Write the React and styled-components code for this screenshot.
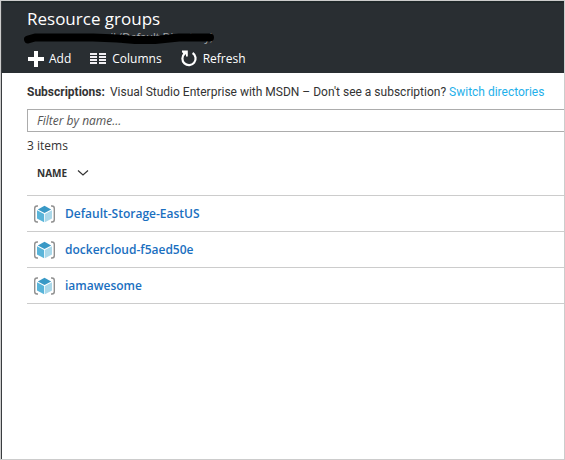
import React, { useState } from "react";
import styled, { createGlobalStyle } from "styled-components";

const GlobalStyle = createGlobalStyle`
  *, *::before, *::after { box-sizing: border-box; }
  body { margin: 0; background: #fff; }
  body, button, input { font-family: "Open Sans", "Noto Sans", sans-serif; font-size: 12px; }
`;

const Blade = styled.div`
  min-height: 100vh;
  border: 1px solid #ccc;
  color: #333;
  line-height: 16px;
`;

const BladeInner = styled.div`
  min-height: calc(100vh - 2px);
  border-left: 1px solid #3a3d40;
`;

const Header = styled.header`
  background: #292e32;
  border-top: 2px solid #20282a;
  color: #fff;
  padding: 4px 25px 1px;
`;

const Title = styled.h1`
  margin: 0;
  font-size: 17px;
  font-weight: 400;
  line-height: 24px;
`;

const Subtitle = styled.div`
  position: relative;
  height: 14px;
  width: 186px;
  color: #a9acae;
  font-size: 11px;
  line-height: 12px;
  text-align: right;
`;

const Scribble = styled.svg`
  position: absolute;
  left: -4px;
  top: 0;
`;

const Toolbar = styled.div`
  display: flex;
  gap: 18px;
  height: 27px;
  align-items: center;
`;

const ToolButton = styled.button`
  display: flex;
  align-items: center;
  gap: 5px;
  padding: 0;
  border: 0;
  background: none;
  color: #fff;
  line-height: 16px;
  cursor: pointer;
`;

const Content = styled.main`
  padding: 11px 0 0 25px;
`;

const Subscriptions = styled.p`
  display: flex;
  gap: 5px;
  margin: 0;
  font-family: Roboto, "Open Sans", sans-serif;
`;

const SwitchLink = styled.a`
  color: #1fb0ea;
  text-decoration: none;
`;

const FilterInput = styled.input`
  display: block;
  width: 100%;
  height: 23px;
  margin: 9px 0 6px;
  padding: 0 9px;
  border: 1px solid #acacac;
  border-right: 0;
  border-radius: 0;
  outline: 0;
  color: #333;
  &::placeholder { color: #555; font-style: italic; opacity: 1; }
`;

const Count = styled.div``;

const GroupTable = styled.table`
  width: 100%;
  border-collapse: separate;
  border-spacing: 0;
`;

const HeadCell = styled.th`
  height: 41px;
  padding: 0 10px 4px;
  text-align: left;
`;

const SortButton = styled.button`
  display: flex;
  align-items: center;
  gap: 10px;
  padding: 0;
  border: 0;
  background: none;
  color: #333;
  font-size: 10px;
  font-weight: 700;
  line-height: 16px;
  cursor: pointer;
`;

const BodyRow = styled.tr`
  &:last-child > td { height: 37px; border-bottom: 1px solid #ccc; }
`;

const Cell = styled.td`
  height: 36px;
  padding: 0 6px;
  border-top: 1px solid #ccc;
`;

const GroupLink = styled.a`
  display: flex;
  align-items: center;
  gap: 9px;
  color: #1a6fc0;
  font-weight: 600;
  text-decoration: none;
`;

const AddIcon = () => (
  <svg width="17" height="16" viewBox="0 0 17 16" aria-hidden="true">
    <path d="M1 6h6V0h4v6h6v4h-6v6H7v-6H1z" fill="#fff" />
  </svg>
);

const ColumnsIcon = () => (
  <svg width="18" height="11" viewBox="0 0 18 11" aria-hidden="true">
    <path d="M1 0h7v2H1zM10 0h7v2h-7zM1 3h7v2H1zM10 3h7v2h-7zM1 6h7v2H1zM10 6h7v2h-7zM1 9h7v2H1zM10 9h7v2h-7z" fill="#f0eef2" />
  </svg>
);

const RefreshIcon = () => (
  <svg width="18" height="17" viewBox="0 0 18 17" aria-hidden="true">
    <path d="M12.600 3A6.600 6.600 0 1 1 4.600 3.600" fill="none" stroke="#fff" strokeWidth="2.200" />
    <path d="M2 .6h5.800v6H6V4.200L4 5 2.500 2.400H2z" fill="#fff" />
  </svg>
);

const ChevronIcon = () => (
  <svg width="12" height="8" viewBox="0 0 12 8" aria-hidden="true">
    <path d="M1 1.500l5 4.500 5-4.500" fill="none" stroke="#333" strokeWidth="1.200" />
  </svg>
);

const GroupIcon = () => (
  <svg width="23" height="18" viewBox="0 0 23 18" aria-hidden="true">
    <path d="M5 1H4Q1.700 1 1.700 3.500v11Q1.700 17 4 17h1M18 1h1q2.300 0 2.300 2.500v11Q21.300 17 19 17h-1" fill="none" stroke="#909090" strokeWidth="1.400" />
    <path d="M11.500 .8l6.700 3.600-6.700 3.700-6.700-3.700z" fill="#3999c6" />
    <path d="M4 5.200l7.100 3.900v8.200L4 13.600z" fill="#59b4d9" />
    <path d="M19 5.200l-7.100 3.900v8.200l7.100-3.700z" fill="#a9d8ea" />
  </svg>
);

const groups = ["Default-Storage-EastUS", "dockercloud-f5aed50e", "iamawesome"];

export default function App() {
  const [filter, setFilter] = useState("");
  const [descending, setDescending] = useState(false);
  const visible = groups.filter((name) => name.toLowerCase().includes(filter.toLowerCase()));
  if (descending) visible.reverse();

  return (
    <>
      <GlobalStyle />
      <Blade>
        <BladeInner>
          <Header>
            <Title>Resource groups</Title>
            <Subtitle>
              il (Default Directory)
              <Scribble width="194" height="14" viewBox="0 0 194 14" aria-hidden="true">
                <path d="M5 8.500L12 6.500H70L94 7.500 112 9H132L156 6.500H187" fill="none" stroke="#000" strokeWidth="8" strokeLinecap="round" strokeLinejoin="round" />
              </Scribble>
            </Subtitle>
            <Toolbar>
              <ToolButton type="button"><AddIcon />Add</ToolButton>
              <ToolButton type="button"><ColumnsIcon />Columns</ToolButton>
              <ToolButton type="button"><RefreshIcon />Refresh</ToolButton>
            </Toolbar>
          </Header>
          <Content>
            <Subscriptions>
              <strong>Subscriptions:</strong>
              <span>
                Visual Studio Enterprise with MSDN – Don't see a subscription?{" "}
                <SwitchLink href="#directories">Switch directories</SwitchLink>
              </span>
            </Subscriptions>
            <FilterInput
              type="text"
              aria-label="Filter by name"
              placeholder="Filter by name..."
              value={filter}
              onChange={(event) => setFilter(event.target.value)}
            />
            <Count>{visible.length} items</Count>
            <GroupTable>
              <thead>
                <tr>
                  <HeadCell scope="col" aria-sort={descending ? "descending" : "ascending"}>
                    <SortButton type="button" onClick={() => setDescending(!descending)}>
                      NAME
                      <ChevronIcon />
                    </SortButton>
                  </HeadCell>
                </tr>
              </thead>
              <tbody>
                {visible.map((name) => (
                  <BodyRow key={name}>
                    <Cell>
                      <GroupLink href={`#${name}`}><GroupIcon />{name}</GroupLink>
                    </Cell>
                  </BodyRow>
                ))}
              </tbody>
            </GroupTable>
          </Content>
        </BladeInner>
      </Blade>
    </>
  );
}
